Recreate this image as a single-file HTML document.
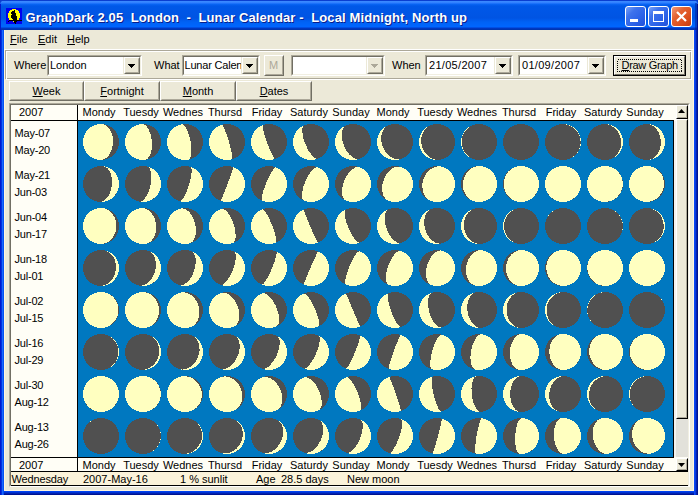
<!DOCTYPE html>
<html><head><meta charset="utf-8">
<style>
*{margin:0;padding:0;box-sizing:border-box}
html,body{width:698px;height:495px;overflow:hidden;background:#0A3ED0}
body{position:relative;font-family:"Liberation Sans",sans-serif;font-size:11px;color:#000}
.a{position:absolute}
.t{position:absolute;white-space:pre;line-height:1}
u{text-decoration:underline}
#title{position:absolute;left:0;top:0;width:698px;height:30px;border-top-left-radius:5px;border-top-right-radius:5px;
background:linear-gradient(#0A3ED0 0px,#0A3ED0 1px,#3D8BFF 1px,#2F7EFF 3px,#0A66F5 4px,#0058E8 6px,#0054E3 18px,#0062F5 22px,#0066FF 27px,#0039C9 28px,#0033A8 30px)}
#ttext{position:absolute;left:25.5px;top:11px;font-weight:bold;font-size:13px;line-height:13px;color:#fff;text-shadow:1px 1px 0 #0A1E8A;white-space:pre;letter-spacing:0.12px}
.tb{position:absolute;top:6px;width:21px;height:21px;border-radius:3px;border:1px solid #fff}
</style></head><body>
<div class="a" style="left:4px;top:30px;width:690px;height:461px;background:#ECE9D8;border-left:1px solid #FFF5DE;border-right:1px solid #FFF5DE;border-bottom:1px solid #FFF5DE"></div>
<div class="a" style="left:4px;top:491px;width:690px;height:1px;background:#0042F0"></div>
<div class="a" style="left:4px;top:492px;width:690px;height:1px;background:#0032D4"></div>
<div class="a" style="left:4px;top:493px;width:690px;height:1px;background:#0022B0"></div>
<div class="a" style="left:0px;top:494px;width:698px;height:1px;background:#001290"></div>
<div id="title">
 <div class="a" style="left:6px;top:8px;width:16px;height:16px;background:#0000F0">
  <svg width="16" height="16" style="position:absolute;left:0;top:0" shape-rendering="crispEdges"><rect x="6" y="1" width="4" height="1" fill="#FFFF00"/><rect x="4" y="2" width="8" height="1" fill="#FFFF00"/><rect x="3" y="3" width="10" height="1" fill="#FFFF00"/><rect x="3" y="4" width="10" height="1" fill="#FFFF00"/><rect x="2" y="5" width="12" height="1" fill="#FFFF00"/><rect x="2" y="6" width="12" height="1" fill="#FFFF00"/><rect x="2" y="7" width="12" height="1" fill="#FFFF00"/><rect x="2" y="8" width="12" height="1" fill="#FFFF00"/><rect x="2" y="9" width="12" height="1" fill="#FFFF00"/><rect x="3" y="10" width="10" height="1" fill="#FFFF00"/><rect x="3" y="11" width="10" height="1" fill="#FFFF00"/><rect x="7" y="13" width="1" height="1" fill="#FFFF00"/><rect x="8" y="2" width="1" height="1" fill="#000"/><rect x="6" y="3" width="3" height="1" fill="#000"/><rect x="5" y="4" width="4" height="1" fill="#000"/><rect x="5" y="5" width="5" height="1" fill="#000"/><rect x="6" y="6" width="4" height="1" fill="#000"/><rect x="5" y="7" width="5" height="1" fill="#000"/><rect x="5" y="8" width="6" height="1" fill="#000"/><rect x="5" y="9" width="6" height="1" fill="#000"/><rect x="6" y="10" width="5" height="1" fill="#000"/><rect x="7" y="11" width="4" height="1" fill="#000"/><rect x="3" y="12" width="13" height="1" fill="#000"/><rect x="2" y="13" width="1" height="1" fill="#000"/><rect x="8" y="13" width="3" height="1" fill="#000"/><rect x="8" y="14" width="2" height="1" fill="#000"/><rect x="9" y="15" width="1" height="1" fill="#000"/></svg>
 </div>
 <div id="ttext">GraphDark 2.05  London  -  Lunar Calendar -  Local Midnight, North up</div>
 <div class="tb" style="left:625px;background:linear-gradient(135deg,#7AA2F8 0%,#3E72EC 30%,#2C62E8 65%,#2050DA 100%)">
  <div class="a" style="left:4px;top:12px;width:8px;height:3px;background:#fff"></div>
 </div>
 <div class="tb" style="left:648px;background:linear-gradient(135deg,#7AA2F8 0%,#3E72EC 30%,#2C62E8 65%,#2050DA 100%)">
  <div class="a" style="left:4px;top:4px;width:11px;height:11px;border:1px solid #fff;border-top:3px solid #fff"></div>
 </div>
 <div class="tb" style="left:671px;background:linear-gradient(135deg,#F49A78 0%,#E46232 35%,#DC4E1C 70%,#C23C10 100%)">
  <svg width="19" height="19" style="position:absolute;left:0;top:0"><path d="M5 5 L14 14 M14 5 L5 14" stroke="#fff" stroke-width="2.2"/></svg>
 </div>
</div>
<div class="t" style="left:10px;top:33.69px;font-size:11px;"><u>F</u>ile</div><div class="t" style="left:38px;top:33.69px;font-size:11px;"><u>E</u>dit</div><div class="t" style="left:67px;top:33.69px;font-size:11px;"><u>H</u>elp</div><div class="a" style="left:4px;top:49px;width:690px;height:1px;background:#fff"></div><div class="a" style="left:5px;top:50px;width:686px;height:29px;border:1px solid #ACA899"></div><div class="a" style="left:6px;top:51px;width:686px;height:29px;border:1px solid #fff"></div><div class="t" style="left:14px;top:59.69px;font-size:11px;">Where</div><div class="a" style="left:47px;top:55px;width:95px;height:21px;background:#fff;border-top:1px solid #ACA899;border-left:1px solid #ACA899;border-right:1px solid #fff;border-bottom:1px solid #fff"></div><div class="a" style="left:48px;top:56px;width:93px;height:19px;border-top:1px solid #716F64;border-left:1px solid #716F64;border-right:1px solid #F1EFE2;border-bottom:1px solid #F1EFE2"></div><div class="t" style="left:50px;top:60.09px;font-size:11px;letter-spacing:0px">London</div><div class="a" style="left:123px;top:57px;width:1px;height:17px;background:#ECE9D8"></div><div class="a" style="left:124px;top:57px;width:16px;height:17px;background:#ECE9D8;border-top:1px solid #fff;border-left:1px solid #fff;border-right:1px solid #716F64;border-bottom:1px solid #716F64"></div><div class="a" style="left:125px;top:58px;width:14px;height:15px;border-top:1px solid #ECE9D8;border-left:1px solid #ECE9D8;border-right:1px solid #ACA899;border-bottom:1px solid #ACA899"></div><svg class="a" style="left:128px;top:64px" width="7" height="4" shape-rendering="crispEdges"><path d="M0,0H7L3.5,4Z" fill="#000"/></svg><div class="t" style="left:154px;top:59.69px;font-size:11px;">What</div><div class="a" style="left:182px;top:55px;width:78px;height:21px;background:#fff;border-top:1px solid #ACA899;border-left:1px solid #ACA899;border-right:1px solid #fff;border-bottom:1px solid #fff"></div><div class="a" style="left:183px;top:56px;width:76px;height:19px;border-top:1px solid #716F64;border-left:1px solid #716F64;border-right:1px solid #F1EFE2;border-bottom:1px solid #F1EFE2"></div><div class="t" style="left:184.5px;top:60.09px;font-size:11px;letter-spacing:-0.2px">Lunar Calen</div><div class="a" style="left:241px;top:57px;width:1px;height:17px;background:#ECE9D8"></div><div class="a" style="left:242px;top:57px;width:16px;height:17px;background:#ECE9D8;border-top:1px solid #fff;border-left:1px solid #fff;border-right:1px solid #716F64;border-bottom:1px solid #716F64"></div><div class="a" style="left:243px;top:58px;width:14px;height:15px;border-top:1px solid #ECE9D8;border-left:1px solid #ECE9D8;border-right:1px solid #ACA899;border-bottom:1px solid #ACA899"></div><svg class="a" style="left:246px;top:64px" width="7" height="4" shape-rendering="crispEdges"><path d="M0,0H7L3.5,4Z" fill="#000"/></svg><div class="a" style="left:264px;top:55px;width:20px;height:21px;background:#ECE9D8;border-top:1px solid #fff;border-left:1px solid #fff;border-right:1px solid #716F64;border-bottom:1px solid #716F64"></div><div class="a" style="left:265px;top:56px;width:18px;height:19px;border-top:1px solid #ECE9D8;border-left:1px solid #ECE9D8;border-right:1px solid #ACA899;border-bottom:1px solid #ACA899"></div><div class="t" style="left:269px;top:59.69px;font-size:11px;color:#ACA899">M</div><div class="a" style="left:291px;top:55px;width:94px;height:21px;background:#fff;border-top:1px solid #ACA899;border-left:1px solid #ACA899;border-right:1px solid #fff;border-bottom:1px solid #fff"></div><div class="a" style="left:292px;top:56px;width:92px;height:19px;border-top:1px solid #716F64;border-left:1px solid #716F64;border-right:1px solid #F1EFE2;border-bottom:1px solid #F1EFE2"></div><div class="a" style="left:366px;top:57px;width:1px;height:17px;background:#ECE9D8"></div><div class="a" style="left:367px;top:57px;width:16px;height:17px;background:#ECE9D8;border-top:1px solid #fff;border-left:1px solid #fff;border-right:1px solid #716F64;border-bottom:1px solid #716F64"></div><div class="a" style="left:368px;top:58px;width:14px;height:15px;border-top:1px solid #ECE9D8;border-left:1px solid #ECE9D8;border-right:1px solid #ACA899;border-bottom:1px solid #ACA899"></div><svg class="a" style="left:371px;top:64px" width="7" height="4" shape-rendering="crispEdges"><path d="M0,0H7L3.5,4Z" fill="#ACA899"/></svg><div class="t" style="left:392px;top:59.69px;font-size:11px;">When</div><div class="a" style="left:425px;top:55px;width:88px;height:21px;background:#fff;border-top:1px solid #ACA899;border-left:1px solid #ACA899;border-right:1px solid #fff;border-bottom:1px solid #fff"></div><div class="a" style="left:426px;top:56px;width:86px;height:19px;border-top:1px solid #716F64;border-left:1px solid #716F64;border-right:1px solid #F1EFE2;border-bottom:1px solid #F1EFE2"></div><div class="t" style="left:429px;top:60.09px;font-size:11px;letter-spacing:0.3px">21/05/2007</div><div class="a" style="left:494px;top:57px;width:1px;height:17px;background:#ECE9D8"></div><div class="a" style="left:495px;top:57px;width:16px;height:17px;background:#ECE9D8;border-top:1px solid #fff;border-left:1px solid #fff;border-right:1px solid #716F64;border-bottom:1px solid #716F64"></div><div class="a" style="left:496px;top:58px;width:14px;height:15px;border-top:1px solid #ECE9D8;border-left:1px solid #ECE9D8;border-right:1px solid #ACA899;border-bottom:1px solid #ACA899"></div><svg class="a" style="left:499px;top:64px" width="7" height="4" shape-rendering="crispEdges"><path d="M0,0H7L3.5,4Z" fill="#000"/></svg><div class="a" style="left:518px;top:55px;width:88px;height:21px;background:#fff;border-top:1px solid #ACA899;border-left:1px solid #ACA899;border-right:1px solid #fff;border-bottom:1px solid #fff"></div><div class="a" style="left:519px;top:56px;width:86px;height:19px;border-top:1px solid #716F64;border-left:1px solid #716F64;border-right:1px solid #F1EFE2;border-bottom:1px solid #F1EFE2"></div><div class="t" style="left:522px;top:60.09px;font-size:11px;letter-spacing:0.3px">01/09/2007</div><div class="a" style="left:587px;top:57px;width:1px;height:17px;background:#ECE9D8"></div><div class="a" style="left:588px;top:57px;width:16px;height:17px;background:#ECE9D8;border-top:1px solid #fff;border-left:1px solid #fff;border-right:1px solid #716F64;border-bottom:1px solid #716F64"></div><div class="a" style="left:589px;top:58px;width:14px;height:15px;border-top:1px solid #ECE9D8;border-left:1px solid #ECE9D8;border-right:1px solid #ACA899;border-bottom:1px solid #ACA899"></div><svg class="a" style="left:592px;top:64px" width="7" height="4" shape-rendering="crispEdges"><path d="M0,0H7L3.5,4Z" fill="#000"/></svg><div class="a" style="left:613px;top:55px;width:73px;height:21px;background:#ECE9D8;border:1px solid #000"></div><div class="a" style="left:614px;top:56px;width:71px;height:19px;border-top:1px solid #fff;border-left:1px solid #fff;border-right:1px solid #716F64;border-bottom:1px solid #716F64"></div><svg class="a" style="left:617px;top:59px" width="65" height="13" shape-rendering="crispEdges"><rect x="0.5" y="0.5" width="64" height="12" fill="none" stroke="#000" stroke-width="1" stroke-dasharray="1,1"/></svg><div class="t" style="left:621.5px;top:59.69px;font-size:11px;letter-spacing:-0.3px"><u>D</u>raw Graph</div><div class="a" style="left:9px;top:81px;width:75px;height:20px;background:#ECE9D8;border-top:1px solid #fff;border-left:1px solid #fff;border-right:1px solid #716F64;border-bottom:1px solid #716F64"></div><div class="a" style="left:10px;top:82px;width:73px;height:18px;border-top:1px solid #ECE9D8;border-left:1px solid #ECE9D8;border-right:1px solid #ACA899;border-bottom:1px solid #ACA899"></div><div class="t" style="left:9px;top:85.69px;width:75px;text-align:center;font-size:11px"><u>W</u>eek</div><div class="a" style="left:84px;top:81px;width:76px;height:20px;background:#ECE9D8;border-top:1px solid #fff;border-left:1px solid #fff;border-right:1px solid #716F64;border-bottom:1px solid #716F64"></div><div class="a" style="left:85px;top:82px;width:74px;height:18px;border-top:1px solid #ECE9D8;border-left:1px solid #ECE9D8;border-right:1px solid #ACA899;border-bottom:1px solid #ACA899"></div><div class="t" style="left:84px;top:85.69px;width:76px;text-align:center;font-size:11px"><u>F</u>ortnight</div><div class="a" style="left:160px;top:81px;width:76px;height:20px;background:#ECE9D8;border-top:1px solid #fff;border-left:1px solid #fff;border-right:1px solid #716F64;border-bottom:1px solid #716F64"></div><div class="a" style="left:161px;top:82px;width:74px;height:18px;border-top:1px solid #ECE9D8;border-left:1px solid #ECE9D8;border-right:1px solid #ACA899;border-bottom:1px solid #ACA899"></div><div class="t" style="left:160px;top:85.69px;width:76px;text-align:center;font-size:11px"><u>M</u>onth</div><div class="a" style="left:236px;top:81px;width:76px;height:20px;background:#ECE9D8;border-top:1px solid #fff;border-left:1px solid #fff;border-right:1px solid #716F64;border-bottom:1px solid #716F64"></div><div class="a" style="left:237px;top:82px;width:74px;height:18px;border-top:1px solid #ECE9D8;border-left:1px solid #ECE9D8;border-right:1px solid #ACA899;border-bottom:1px solid #ACA899"></div><div class="t" style="left:236px;top:85.69px;width:76px;text-align:center;font-size:11px"><u>D</u>ates</div><div class="a" style="left:9px;top:103px;width:681px;height:384px;border-top:1px solid #ACA899;border-left:1px solid #ACA899;border-right:1px solid #fff;border-bottom:1px solid #fff"></div><div class="a" style="left:10px;top:104px;width:679px;height:382px;background:#FFFEF6;border-top:1px solid #716F64;border-left:1px solid #716F64;border-right:1px solid #F1EFE2;border-bottom:1px solid #F1EFE2"></div><div class="a" style="left:11px;top:120px;width:663px;height:1px;background:#000"></div><div class="a" style="left:77px;top:105px;width:1px;height:366px;background:#000"></div><div class="a" style="left:673px;top:120px;width:1px;height:338px;background:#000"></div><div class="a" style="left:11px;top:457px;width:663px;height:1px;background:#000"></div><div class="a" style="left:11px;top:471px;width:677px;height:1px;background:#000"></div><div class="t" style="left:19px;top:106.69px;font-size:11px;">2007</div><div class="t" style="left:19px;top:459.69px;font-size:11px;">2007</div><div class="t" style="left:78px;top:106.69px;width:42px;text-align:center;font-size:11px">Mondy</div><div class="t" style="left:78px;top:459.69px;width:42px;text-align:center;font-size:11px">Mondy</div><div class="t" style="left:120px;top:106.69px;width:42px;text-align:center;font-size:11px">Tuesdy</div><div class="t" style="left:120px;top:459.69px;width:42px;text-align:center;font-size:11px">Tuesdy</div><div class="t" style="left:162px;top:106.69px;width:42px;text-align:center;font-size:11px">Wednes</div><div class="t" style="left:162px;top:459.69px;width:42px;text-align:center;font-size:11px">Wednes</div><div class="t" style="left:204px;top:106.69px;width:42px;text-align:center;font-size:11px">Thursd</div><div class="t" style="left:204px;top:459.69px;width:42px;text-align:center;font-size:11px">Thursd</div><div class="t" style="left:246px;top:106.69px;width:42px;text-align:center;font-size:11px">Friday</div><div class="t" style="left:246px;top:459.69px;width:42px;text-align:center;font-size:11px">Friday</div><div class="t" style="left:288px;top:106.69px;width:42px;text-align:center;font-size:11px">Saturdy</div><div class="t" style="left:288px;top:459.69px;width:42px;text-align:center;font-size:11px">Saturdy</div><div class="t" style="left:330px;top:106.69px;width:42px;text-align:center;font-size:11px">Sunday</div><div class="t" style="left:330px;top:459.69px;width:42px;text-align:center;font-size:11px">Sunday</div><div class="t" style="left:372px;top:106.69px;width:42px;text-align:center;font-size:11px">Mondy</div><div class="t" style="left:372px;top:459.69px;width:42px;text-align:center;font-size:11px">Mondy</div><div class="t" style="left:414px;top:106.69px;width:42px;text-align:center;font-size:11px">Tuesdy</div><div class="t" style="left:414px;top:459.69px;width:42px;text-align:center;font-size:11px">Tuesdy</div><div class="t" style="left:456px;top:106.69px;width:42px;text-align:center;font-size:11px">Wednes</div><div class="t" style="left:456px;top:459.69px;width:42px;text-align:center;font-size:11px">Wednes</div><div class="t" style="left:498px;top:106.69px;width:42px;text-align:center;font-size:11px">Thursd</div><div class="t" style="left:498px;top:459.69px;width:42px;text-align:center;font-size:11px">Thursd</div><div class="t" style="left:540px;top:106.69px;width:42px;text-align:center;font-size:11px">Friday</div><div class="t" style="left:540px;top:459.69px;width:42px;text-align:center;font-size:11px">Friday</div><div class="t" style="left:582px;top:106.69px;width:42px;text-align:center;font-size:11px">Saturdy</div><div class="t" style="left:582px;top:459.69px;width:42px;text-align:center;font-size:11px">Saturdy</div><div class="t" style="left:624px;top:106.69px;width:42px;text-align:center;font-size:11px">Sunday</div><div class="t" style="left:624px;top:459.69px;width:42px;text-align:center;font-size:11px">Sunday</div><div class="t" style="left:14.5px;top:127.69px;font-size:11px;letter-spacing:-0.2px">May-07</div><div class="t" style="left:14.5px;top:144.69px;font-size:11px;letter-spacing:-0.2px">May-20</div><div class="t" style="left:14.5px;top:169.69px;font-size:11px;letter-spacing:-0.2px">May-21</div><div class="t" style="left:14.5px;top:186.69px;font-size:11px;letter-spacing:-0.2px">Jun-03</div><div class="t" style="left:14.5px;top:211.69px;font-size:11px;letter-spacing:-0.2px">Jun-04</div><div class="t" style="left:14.5px;top:228.69px;font-size:11px;letter-spacing:-0.2px">Jun-17</div><div class="t" style="left:14.5px;top:253.69px;font-size:11px;letter-spacing:-0.2px">Jun-18</div><div class="t" style="left:14.5px;top:270.69px;font-size:11px;letter-spacing:-0.2px">Jul-01</div><div class="t" style="left:14.5px;top:295.69px;font-size:11px;letter-spacing:-0.2px">Jul-02</div><div class="t" style="left:14.5px;top:312.69px;font-size:11px;letter-spacing:-0.2px">Jul-15</div><div class="t" style="left:14.5px;top:337.69px;font-size:11px;letter-spacing:-0.2px">Jul-16</div><div class="t" style="left:14.5px;top:354.69px;font-size:11px;letter-spacing:-0.2px">Jul-29</div><div class="t" style="left:14.5px;top:379.69px;font-size:11px;letter-spacing:-0.2px">Jul-30</div><div class="t" style="left:14.5px;top:396.69px;font-size:11px;letter-spacing:-0.2px">Aug-12</div><div class="t" style="left:14.5px;top:421.69px;font-size:11px;letter-spacing:-0.2px">Aug-13</div><div class="t" style="left:14.5px;top:438.69px;font-size:11px;letter-spacing:-0.2px">Aug-26</div><div class="a" style="left:78px;top:121px;width:595px;height:336px;background:#0078C0"><svg width="595" height="336" style="position:absolute;left:0;top:0" shape-rendering="crispEdges"><circle cx="23" cy="21" r="18.0" fill="#505050"/><path transform="translate(23,21) rotate(-177.5)" d="M0,-18.0 A18.0,18.0 0 0 1 0,18.0 A11.97,18.0 0 0 1 0,-18.0Z" fill="#FFFFC0"/><circle cx="65" cy="21" r="18.0" fill="#505050"/><path transform="translate(65,21) rotate(175.2)" d="M0,-18.0 A18.0,18.0 0 0 1 0,18.0 A9.03,18.0 0 0 1 0,-18.0Z" fill="#FFFFC0"/><circle cx="107" cy="21" r="18.0" fill="#505050"/><path transform="translate(107,21) rotate(168.8)" d="M0,-18.0 A18.0,18.0 0 0 1 0,18.0 A5.64,18.0 0 0 1 0,-18.0Z" fill="#FFFFC0"/><circle cx="149" cy="21" r="18.0" fill="#505050"/><path transform="translate(149,21) rotate(163.7)" d="M0,-18.0 A18.0,18.0 0 0 1 0,18.0 A1.91,18.0 0 0 1 0,-18.0Z" fill="#FFFFC0"/><circle cx="191" cy="21" r="18.0" fill="#505050"/><path transform="translate(191,21) rotate(159.9)" d="M0,-18.0 A18.0,18.0 0 0 1 0,18.0 A2.04,18.0 0 0 0 0,-18.0Z" fill="#FFFFC0"/><circle cx="233" cy="21" r="18.0" fill="#505050"/><path transform="translate(233,21) rotate(157.8)" d="M0,-18.0 A18.0,18.0 0 0 1 0,18.0 A6.01,18.0 0 0 0 0,-18.0Z" fill="#FFFFC0"/><circle cx="275" cy="21" r="18.0" fill="#505050"/><path transform="translate(275,21) rotate(157.4)" d="M0,-18.0 A18.0,18.0 0 0 1 0,18.0 A9.76,18.0 0 0 0 0,-18.0Z" fill="#FFFFC0"/><circle cx="317" cy="21" r="18.0" fill="#505050"/><path transform="translate(317,21) rotate(159.2)" d="M0,-18.0 A18.0,18.0 0 0 1 0,18.0 A13.06,18.0 0 0 0 0,-18.0Z" fill="#FFFFC0"/><circle cx="359" cy="21" r="18.0" fill="#505050"/><path transform="translate(359,21) rotate(164.1)" d="M0,-18.0 A18.0,18.0 0 0 1 0,18.0 A15.64,18.0 0 0 0 0,-18.0Z" fill="#FFFFC0"/><circle cx="401" cy="21" r="18.0" fill="#505050"/><path transform="translate(401,21) rotate(175.8)" d="M0,-18.0 A18.0,18.0 0 0 1 0,18.0 A17.31,18.0 0 0 0 0,-18.0Z" fill="#FFFFC0"/><circle cx="443" cy="21" r="18.0" fill="#505050"/><path transform="translate(443,21) rotate(-119.9)" d="M0,-18.0 A18.0,18.0 0 0 1 0,18.0 A17.93,18.0 0 0 0 0,-18.0Z" fill="#FFFFC0"/><circle cx="485" cy="21" r="18.0" fill="#505050"/><path transform="translate(485,21) rotate(-30.3)" d="M0,-18.0 A18.0,18.0 0 0 1 0,18.0 A17.50,18.0 0 0 0 0,-18.0Z" fill="#FFFFC0"/><circle cx="527" cy="21" r="18.0" fill="#505050"/><path transform="translate(527,21) rotate(-12.7)" d="M0,-18.0 A18.0,18.0 0 0 1 0,18.0 A16.07,18.0 0 0 0 0,-18.0Z" fill="#FFFFC0"/><circle cx="569" cy="21" r="18.0" fill="#505050"/><path transform="translate(569,21) rotate(-1.9)" d="M0,-18.0 A18.0,18.0 0 0 1 0,18.0 A13.81,18.0 0 0 0 0,-18.0Z" fill="#FFFFC0"/><circle cx="23" cy="63" r="18.0" fill="#505050"/><path transform="translate(23,63) rotate(6.4)" d="M0,-18.0 A18.0,18.0 0 0 1 0,18.0 A10.93,18.0 0 0 0 0,-18.0Z" fill="#FFFFC0"/><circle cx="65" cy="63" r="18.0" fill="#505050"/><path transform="translate(65,63) rotate(12.8)" d="M0,-18.0 A18.0,18.0 0 0 1 0,18.0 A7.64,18.0 0 0 0 0,-18.0Z" fill="#FFFFC0"/><circle cx="107" cy="63" r="18.0" fill="#505050"/><path transform="translate(107,63) rotate(17.5)" d="M0,-18.0 A18.0,18.0 0 0 1 0,18.0 A4.12,18.0 0 0 0 0,-18.0Z" fill="#FFFFC0"/><circle cx="149" cy="63" r="18.0" fill="#505050"/><path transform="translate(149,63) rotate(20.7)" d="M0,-18.0 A18.0,18.0 0 0 1 0,18.0 A0.55,18.0 0 0 0 0,-18.0Z" fill="#FFFFC0"/><circle cx="191" cy="63" r="18.0" fill="#505050"/><path transform="translate(191,63) rotate(22.5)" d="M0,-18.0 A18.0,18.0 0 0 1 0,18.0 A2.94,18.0 0 0 1 0,-18.0Z" fill="#FFFFC0"/><circle cx="233" cy="63" r="18.0" fill="#505050"/><path transform="translate(233,63) rotate(23.0)" d="M0,-18.0 A18.0,18.0 0 0 1 0,18.0 A6.26,18.0 0 0 1 0,-18.0Z" fill="#FFFFC0"/><circle cx="275" cy="63" r="18.0" fill="#505050"/><path transform="translate(275,63) rotate(22.2)" d="M0,-18.0 A18.0,18.0 0 0 1 0,18.0 A9.31,18.0 0 0 1 0,-18.0Z" fill="#FFFFC0"/><circle cx="317" cy="63" r="18.0" fill="#505050"/><path transform="translate(317,63) rotate(20.0)" d="M0,-18.0 A18.0,18.0 0 0 1 0,18.0 A12.03,18.0 0 0 1 0,-18.0Z" fill="#FFFFC0"/><circle cx="359" cy="63" r="18.0" fill="#505050"/><path transform="translate(359,63) rotate(16.1)" d="M0,-18.0 A18.0,18.0 0 0 1 0,18.0 A14.32,18.0 0 0 1 0,-18.0Z" fill="#FFFFC0"/><circle cx="401" cy="63" r="18.0" fill="#505050"/><path transform="translate(401,63) rotate(9.7)" d="M0,-18.0 A18.0,18.0 0 0 1 0,18.0 A16.11,18.0 0 0 1 0,-18.0Z" fill="#FFFFC0"/><circle cx="443" cy="63" r="18.0" fill="#505050"/><path transform="translate(443,63) rotate(-2.2)" d="M0,-18.0 A18.0,18.0 0 0 1 0,18.0 A17.33,18.0 0 0 1 0,-18.0Z" fill="#FFFFC0"/><circle cx="485" cy="63" r="18.0" fill="#505050"/><path transform="translate(485,63) rotate(-42.5)" d="M0,-18.0 A18.0,18.0 0 0 1 0,18.0 A17.89,18.0 0 0 1 0,-18.0Z" fill="#FFFFC0"/><circle cx="527" cy="63" r="18.0" fill="#505050"/><path transform="translate(527,63) rotate(-142.2)" d="M0,-18.0 A18.0,18.0 0 0 1 0,18.0 A17.77,18.0 0 0 1 0,-18.0Z" fill="#FFFFC0"/><circle cx="569" cy="63" r="18.0" fill="#505050"/><path transform="translate(569,63) rotate(-167.2)" d="M0,-18.0 A18.0,18.0 0 0 1 0,18.0 A16.93,18.0 0 0 1 0,-18.0Z" fill="#FFFFC0"/><circle cx="23" cy="105" r="18.0" fill="#505050"/><path transform="translate(23,105) rotate(-179.0)" d="M0,-18.0 A18.0,18.0 0 0 1 0,18.0 A15.39,18.0 0 0 1 0,-18.0Z" fill="#FFFFC0"/><circle cx="65" cy="105" r="18.0" fill="#505050"/><path transform="translate(65,105) rotate(172.6)" d="M0,-18.0 A18.0,18.0 0 0 1 0,18.0 A13.16,18.0 0 0 1 0,-18.0Z" fill="#FFFFC0"/><circle cx="107" cy="105" r="18.0" fill="#505050"/><path transform="translate(107,105) rotate(166.1)" d="M0,-18.0 A18.0,18.0 0 0 1 0,18.0 A10.31,18.0 0 0 1 0,-18.0Z" fill="#FFFFC0"/><circle cx="149" cy="105" r="18.0" fill="#505050"/><path transform="translate(149,105) rotate(161.4)" d="M0,-18.0 A18.0,18.0 0 0 1 0,18.0 A6.94,18.0 0 0 1 0,-18.0Z" fill="#FFFFC0"/><circle cx="191" cy="105" r="18.0" fill="#505050"/><path transform="translate(191,105) rotate(158.4)" d="M0,-18.0 A18.0,18.0 0 0 1 0,18.0 A3.15,18.0 0 0 1 0,-18.0Z" fill="#FFFFC0"/><circle cx="233" cy="105" r="18.0" fill="#505050"/><path transform="translate(233,105) rotate(156.9)" d="M0,-18.0 A18.0,18.0 0 0 1 0,18.0 A0.87,18.0 0 0 0 0,-18.0Z" fill="#FFFFC0"/><circle cx="275" cy="105" r="18.0" fill="#505050"/><path transform="translate(275,105) rotate(157.2)" d="M0,-18.0 A18.0,18.0 0 0 1 0,18.0 A4.94,18.0 0 0 0 0,-18.0Z" fill="#FFFFC0"/><circle cx="317" cy="105" r="18.0" fill="#505050"/><path transform="translate(317,105) rotate(159.3)" d="M0,-18.0 A18.0,18.0 0 0 1 0,18.0 A8.81,18.0 0 0 0 0,-18.0Z" fill="#FFFFC0"/><circle cx="359" cy="105" r="18.0" fill="#505050"/><path transform="translate(359,105) rotate(163.5)" d="M0,-18.0 A18.0,18.0 0 0 1 0,18.0 A12.24,18.0 0 0 0 0,-18.0Z" fill="#FFFFC0"/><circle cx="401" cy="105" r="18.0" fill="#505050"/><path transform="translate(401,105) rotate(170.5)" d="M0,-18.0 A18.0,18.0 0 0 1 0,18.0 A15.00,18.0 0 0 0 0,-18.0Z" fill="#FFFFC0"/><circle cx="443" cy="105" r="18.0" fill="#505050"/><path transform="translate(443,105) rotate(-177.9)" d="M0,-18.0 A18.0,18.0 0 0 1 0,18.0 A16.91,18.0 0 0 0 0,-18.0Z" fill="#FFFFC0"/><circle cx="485" cy="105" r="18.0" fill="#505050"/><path transform="translate(485,105) rotate(-145.2)" d="M0,-18.0 A18.0,18.0 0 0 1 0,18.0 A17.84,18.0 0 0 0 0,-18.0Z" fill="#FFFFC0"/><circle cx="527" cy="105" r="18.0" fill="#505050"/><path transform="translate(527,105) rotate(-29.9)" d="M0,-18.0 A18.0,18.0 0 0 1 0,18.0 A17.78,18.0 0 0 0 0,-18.0Z" fill="#FFFFC0"/><circle cx="569" cy="105" r="18.0" fill="#505050"/><path transform="translate(569,105) rotate(-3.4)" d="M0,-18.0 A18.0,18.0 0 0 1 0,18.0 A16.77,18.0 0 0 0 0,-18.0Z" fill="#FFFFC0"/><circle cx="23" cy="147" r="18.0" fill="#505050"/><path transform="translate(23,147) rotate(7.6)" d="M0,-18.0 A18.0,18.0 0 0 1 0,18.0 A14.95,18.0 0 0 0 0,-18.0Z" fill="#FFFFC0"/><circle cx="65" cy="147" r="18.0" fill="#505050"/><path transform="translate(65,147) rotate(14.6)" d="M0,-18.0 A18.0,18.0 0 0 1 0,18.0 A12.48,18.0 0 0 0 0,-18.0Z" fill="#FFFFC0"/><circle cx="107" cy="147" r="18.0" fill="#505050"/><path transform="translate(107,147) rotate(19.1)" d="M0,-18.0 A18.0,18.0 0 0 1 0,18.0 A9.54,18.0 0 0 0 0,-18.0Z" fill="#FFFFC0"/><circle cx="149" cy="147" r="18.0" fill="#505050"/><path transform="translate(149,147) rotate(21.9)" d="M0,-18.0 A18.0,18.0 0 0 1 0,18.0 A6.29,18.0 0 0 0 0,-18.0Z" fill="#FFFFC0"/><circle cx="191" cy="147" r="18.0" fill="#505050"/><path transform="translate(191,147) rotate(23.3)" d="M0,-18.0 A18.0,18.0 0 0 1 0,18.0 A2.88,18.0 0 0 0 0,-18.0Z" fill="#FFFFC0"/><circle cx="233" cy="147" r="18.0" fill="#505050"/><path transform="translate(233,147) rotate(23.4)" d="M0,-18.0 A18.0,18.0 0 0 1 0,18.0 A0.56,18.0 0 0 1 0,-18.0Z" fill="#FFFFC0"/><circle cx="275" cy="147" r="18.0" fill="#505050"/><path transform="translate(275,147) rotate(22.3)" d="M0,-18.0 A18.0,18.0 0 0 1 0,18.0 A3.94,18.0 0 0 1 0,-18.0Z" fill="#FFFFC0"/><circle cx="317" cy="147" r="18.0" fill="#505050"/><path transform="translate(317,147) rotate(19.9)" d="M0,-18.0 A18.0,18.0 0 0 1 0,18.0 A7.16,18.0 0 0 1 0,-18.0Z" fill="#FFFFC0"/><circle cx="359" cy="147" r="18.0" fill="#505050"/><path transform="translate(359,147) rotate(16.3)" d="M0,-18.0 A18.0,18.0 0 0 1 0,18.0 A10.14,18.0 0 0 1 0,-18.0Z" fill="#FFFFC0"/><circle cx="401" cy="147" r="18.0" fill="#505050"/><path transform="translate(401,147) rotate(11.2)" d="M0,-18.0 A18.0,18.0 0 0 1 0,18.0 A12.78,18.0 0 0 1 0,-18.0Z" fill="#FFFFC0"/><circle cx="443" cy="147" r="18.0" fill="#505050"/><path transform="translate(443,147) rotate(4.3)" d="M0,-18.0 A18.0,18.0 0 0 1 0,18.0 A14.98,18.0 0 0 1 0,-18.0Z" fill="#FFFFC0"/><circle cx="485" cy="147" r="18.0" fill="#505050"/><path transform="translate(485,147) rotate(-5.5)" d="M0,-18.0 A18.0,18.0 0 0 1 0,18.0 A16.64,18.0 0 0 1 0,-18.0Z" fill="#FFFFC0"/><circle cx="527" cy="147" r="18.0" fill="#505050"/><path transform="translate(527,147) rotate(-23.8)" d="M0,-18.0 A18.0,18.0 0 0 1 0,18.0 A17.65,18.0 0 0 1 0,-18.0Z" fill="#FFFFC0"/><circle cx="569" cy="147" r="18.0" fill="#505050"/><path transform="translate(569,147) rotate(-115.6)" d="M0,-18.0 A18.0,18.0 0 0 1 0,18.0 A17.94,18.0 0 0 1 0,-18.0Z" fill="#FFFFC0"/><circle cx="23" cy="189" r="18.0" fill="#505050"/><path transform="translate(23,189) rotate(-175.3)" d="M0,-18.0 A18.0,18.0 0 0 1 0,18.0 A17.45,18.0 0 0 1 0,-18.0Z" fill="#FFFFC0"/><circle cx="65" cy="189" r="18.0" fill="#505050"/><path transform="translate(65,189) rotate(171.0)" d="M0,-18.0 A18.0,18.0 0 0 1 0,18.0 A16.15,18.0 0 0 1 0,-18.0Z" fill="#FFFFC0"/><circle cx="107" cy="189" r="18.0" fill="#505050"/><path transform="translate(107,189) rotate(163.6)" d="M0,-18.0 A18.0,18.0 0 0 1 0,18.0 A14.08,18.0 0 0 1 0,-18.0Z" fill="#FFFFC0"/><circle cx="149" cy="189" r="18.0" fill="#505050"/><path transform="translate(149,189) rotate(159.2)" d="M0,-18.0 A18.0,18.0 0 0 1 0,18.0 A11.29,18.0 0 0 1 0,-18.0Z" fill="#FFFFC0"/><circle cx="191" cy="189" r="18.0" fill="#505050"/><path transform="translate(191,189) rotate(156.7)" d="M0,-18.0 A18.0,18.0 0 0 1 0,18.0 A7.91,18.0 0 0 1 0,-18.0Z" fill="#FFFFC0"/><circle cx="233" cy="189" r="18.0" fill="#505050"/><path transform="translate(233,189) rotate(156.1)" d="M0,-18.0 A18.0,18.0 0 0 1 0,18.0 A4.07,18.0 0 0 1 0,-18.0Z" fill="#FFFFC0"/><circle cx="275" cy="189" r="18.0" fill="#505050"/><path transform="translate(275,189) rotate(157.1)" d="M0,-18.0 A18.0,18.0 0 0 1 0,18.0 A0.01,18.0 0 0 0 0,-18.0Z" fill="#FFFFC0"/><circle cx="317" cy="189" r="18.0" fill="#505050"/><path transform="translate(317,189) rotate(159.9)" d="M0,-18.0 A18.0,18.0 0 0 1 0,18.0 A4.12,18.0 0 0 0 0,-18.0Z" fill="#FFFFC0"/><circle cx="359" cy="189" r="18.0" fill="#505050"/><path transform="translate(359,189) rotate(164.5)" d="M0,-18.0 A18.0,18.0 0 0 1 0,18.0 A8.03,18.0 0 0 0 0,-18.0Z" fill="#FFFFC0"/><circle cx="401" cy="189" r="18.0" fill="#505050"/><path transform="translate(401,189) rotate(170.8)" d="M0,-18.0 A18.0,18.0 0 0 1 0,18.0 A11.52,18.0 0 0 0 0,-18.0Z" fill="#FFFFC0"/><circle cx="443" cy="189" r="18.0" fill="#505050"/><path transform="translate(443,189) rotate(179.0)" d="M0,-18.0 A18.0,18.0 0 0 1 0,18.0 A14.38,18.0 0 0 0 0,-18.0Z" fill="#FFFFC0"/><circle cx="485" cy="189" r="18.0" fill="#505050"/><path transform="translate(485,189) rotate(-170.6)" d="M0,-18.0 A18.0,18.0 0 0 1 0,18.0 A16.46,18.0 0 0 0 0,-18.0Z" fill="#FFFFC0"/><circle cx="527" cy="189" r="18.0" fill="#505050"/><path transform="translate(527,189) rotate(-153.1)" d="M0,-18.0 A18.0,18.0 0 0 1 0,18.0 A17.66,18.0 0 0 0 0,-18.0Z" fill="#FFFFC0"/><circle cx="569" cy="189" r="18.0" fill="#505050"/><path transform="translate(569,189) rotate(-43.5)" d="M0,-18.0 A18.0,18.0 0 0 1 0,18.0 A17.95,18.0 0 0 0 0,-18.0Z" fill="#FFFFC0"/><circle cx="23" cy="231" r="18.0" fill="#505050"/><path transform="translate(23,231) rotate(6.0)" d="M0,-18.0 A18.0,18.0 0 0 1 0,18.0 A17.37,18.0 0 0 0 0,-18.0Z" fill="#FFFFC0"/><circle cx="65" cy="231" r="18.0" fill="#505050"/><path transform="translate(65,231) rotate(16.0)" d="M0,-18.0 A18.0,18.0 0 0 1 0,18.0 A15.99,18.0 0 0 0 0,-18.0Z" fill="#FFFFC0"/><circle cx="107" cy="231" r="18.0" fill="#505050"/><path transform="translate(107,231) rotate(21.0)" d="M0,-18.0 A18.0,18.0 0 0 1 0,18.0 A13.96,18.0 0 0 0 0,-18.0Z" fill="#FFFFC0"/><circle cx="149" cy="231" r="18.0" fill="#505050"/><path transform="translate(149,231) rotate(23.5)" d="M0,-18.0 A18.0,18.0 0 0 1 0,18.0 A11.40,18.0 0 0 0 0,-18.0Z" fill="#FFFFC0"/><circle cx="191" cy="231" r="18.0" fill="#505050"/><path transform="translate(191,231) rotate(24.5)" d="M0,-18.0 A18.0,18.0 0 0 1 0,18.0 A8.46,18.0 0 0 0 0,-18.0Z" fill="#FFFFC0"/><circle cx="233" cy="231" r="18.0" fill="#505050"/><path transform="translate(233,231) rotate(24.1)" d="M0,-18.0 A18.0,18.0 0 0 1 0,18.0 A5.26,18.0 0 0 0 0,-18.0Z" fill="#FFFFC0"/><circle cx="275" cy="231" r="18.0" fill="#505050"/><path transform="translate(275,231) rotate(22.5)" d="M0,-18.0 A18.0,18.0 0 0 1 0,18.0 A1.91,18.0 0 0 0 0,-18.0Z" fill="#FFFFC0"/><circle cx="317" cy="231" r="18.0" fill="#505050"/><path transform="translate(317,231) rotate(19.7)" d="M0,-18.0 A18.0,18.0 0 0 1 0,18.0 A1.49,18.0 0 0 1 0,-18.0Z" fill="#FFFFC0"/><circle cx="359" cy="231" r="18.0" fill="#505050"/><path transform="translate(359,231) rotate(15.8)" d="M0,-18.0 A18.0,18.0 0 0 1 0,18.0 A4.85,18.0 0 0 1 0,-18.0Z" fill="#FFFFC0"/><circle cx="401" cy="231" r="18.0" fill="#505050"/><path transform="translate(401,231) rotate(10.8)" d="M0,-18.0 A18.0,18.0 0 0 1 0,18.0 A8.07,18.0 0 0 1 0,-18.0Z" fill="#FFFFC0"/><circle cx="443" cy="231" r="18.0" fill="#505050"/><path transform="translate(443,231) rotate(4.6)" d="M0,-18.0 A18.0,18.0 0 0 1 0,18.0 A11.04,18.0 0 0 1 0,-18.0Z" fill="#FFFFC0"/><circle cx="485" cy="231" r="18.0" fill="#505050"/><path transform="translate(485,231) rotate(-2.7)" d="M0,-18.0 A18.0,18.0 0 0 1 0,18.0 A13.65,18.0 0 0 1 0,-18.0Z" fill="#FFFFC0"/><circle cx="527" cy="231" r="18.0" fill="#505050"/><path transform="translate(527,231) rotate(-10.9)" d="M0,-18.0 A18.0,18.0 0 0 1 0,18.0 A15.75,18.0 0 0 1 0,-18.0Z" fill="#FFFFC0"/><circle cx="569" cy="231" r="18.0" fill="#505050"/><path transform="translate(569,231) rotate(-21.3)" d="M0,-18.0 A18.0,18.0 0 0 1 0,18.0 A17.22,18.0 0 0 1 0,-18.0Z" fill="#FFFFC0"/><circle cx="23" cy="273" r="18.0" fill="#505050"/><path transform="translate(23,273) rotate(-50.1)" d="M0,-18.0 A18.0,18.0 0 0 1 0,18.0 A17.93,18.0 0 0 1 0,-18.0Z" fill="#FFFFC0"/><circle cx="65" cy="273" r="18.0" fill="#505050"/><path transform="translate(65,273) rotate(175.6)" d="M0,-18.0 A18.0,18.0 0 0 1 0,18.0 A17.79,18.0 0 0 1 0,-18.0Z" fill="#FFFFC0"/><circle cx="107" cy="273" r="18.0" fill="#505050"/><path transform="translate(107,273) rotate(161.5)" d="M0,-18.0 A18.0,18.0 0 0 1 0,18.0 A16.75,18.0 0 0 1 0,-18.0Z" fill="#FFFFC0"/><circle cx="149" cy="273" r="18.0" fill="#505050"/><path transform="translate(149,273) rotate(156.7)" d="M0,-18.0 A18.0,18.0 0 0 1 0,18.0 A14.82,18.0 0 0 1 0,-18.0Z" fill="#FFFFC0"/><circle cx="191" cy="273" r="18.0" fill="#505050"/><path transform="translate(191,273) rotate(155.0)" d="M0,-18.0 A18.0,18.0 0 0 1 0,18.0 A12.10,18.0 0 0 1 0,-18.0Z" fill="#FFFFC0"/><circle cx="233" cy="273" r="18.0" fill="#505050"/><path transform="translate(233,273) rotate(155.3)" d="M0,-18.0 A18.0,18.0 0 0 1 0,18.0 A8.71,18.0 0 0 1 0,-18.0Z" fill="#FFFFC0"/><circle cx="275" cy="273" r="18.0" fill="#505050"/><path transform="translate(275,273) rotate(157.3)" d="M0,-18.0 A18.0,18.0 0 0 1 0,18.0 A4.85,18.0 0 0 1 0,-18.0Z" fill="#FFFFC0"/><circle cx="317" cy="273" r="18.0" fill="#505050"/><path transform="translate(317,273) rotate(161.1)" d="M0,-18.0 A18.0,18.0 0 0 1 0,18.0 A0.76,18.0 0 0 1 0,-18.0Z" fill="#FFFFC0"/><circle cx="359" cy="273" r="18.0" fill="#505050"/><path transform="translate(359,273) rotate(166.4)" d="M0,-18.0 A18.0,18.0 0 0 1 0,18.0 A3.36,18.0 0 0 0 0,-18.0Z" fill="#FFFFC0"/><circle cx="401" cy="273" r="18.0" fill="#505050"/><path transform="translate(401,273) rotate(173.0)" d="M0,-18.0 A18.0,18.0 0 0 1 0,18.0 A7.26,18.0 0 0 0 0,-18.0Z" fill="#FFFFC0"/><circle cx="443" cy="273" r="18.0" fill="#505050"/><path transform="translate(443,273) rotate(-179.5)" d="M0,-18.0 A18.0,18.0 0 0 1 0,18.0 A10.76,18.0 0 0 0 0,-18.0Z" fill="#FFFFC0"/><circle cx="485" cy="273" r="18.0" fill="#505050"/><path transform="translate(485,273) rotate(-171.8)" d="M0,-18.0 A18.0,18.0 0 0 1 0,18.0 A13.68,18.0 0 0 0 0,-18.0Z" fill="#FFFFC0"/><circle cx="527" cy="273" r="18.0" fill="#505050"/><path transform="translate(527,273) rotate(-164.1)" d="M0,-18.0 A18.0,18.0 0 0 1 0,18.0 A15.90,18.0 0 0 0 0,-18.0Z" fill="#FFFFC0"/><circle cx="569" cy="273" r="18.0" fill="#505050"/><path transform="translate(569,273) rotate(-156.0)" d="M0,-18.0 A18.0,18.0 0 0 1 0,18.0 A17.34,18.0 0 0 0 0,-18.0Z" fill="#FFFFC0"/><circle cx="23" cy="315" r="18.0" fill="#505050"/><path transform="translate(23,315) rotate(-133.2)" d="M0,-18.0 A18.0,18.0 0 0 1 0,18.0 A17.96,18.0 0 0 0 0,-18.0Z" fill="#FFFFC0"/><circle cx="65" cy="315" r="18.0" fill="#505050"/><path transform="translate(65,315) rotate(16.6)" d="M0,-18.0 A18.0,18.0 0 0 1 0,18.0 A17.79,18.0 0 0 0 0,-18.0Z" fill="#FFFFC0"/><circle cx="107" cy="315" r="18.0" fill="#505050"/><path transform="translate(107,315) rotate(23.9)" d="M0,-18.0 A18.0,18.0 0 0 1 0,18.0 A16.87,18.0 0 0 0 0,-18.0Z" fill="#FFFFC0"/><circle cx="149" cy="315" r="18.0" fill="#505050"/><path transform="translate(149,315) rotate(26.0)" d="M0,-18.0 A18.0,18.0 0 0 1 0,18.0 A15.28,18.0 0 0 0 0,-18.0Z" fill="#FFFFC0"/><circle cx="191" cy="315" r="18.0" fill="#505050"/><path transform="translate(191,315) rotate(26.2)" d="M0,-18.0 A18.0,18.0 0 0 1 0,18.0 A13.13,18.0 0 0 0 0,-18.0Z" fill="#FFFFC0"/><circle cx="233" cy="315" r="18.0" fill="#505050"/><path transform="translate(233,315) rotate(25.1)" d="M0,-18.0 A18.0,18.0 0 0 1 0,18.0 A10.53,18.0 0 0 0 0,-18.0Z" fill="#FFFFC0"/><circle cx="275" cy="315" r="18.0" fill="#505050"/><path transform="translate(275,315) rotate(22.9)" d="M0,-18.0 A18.0,18.0 0 0 1 0,18.0 A7.57,18.0 0 0 0 0,-18.0Z" fill="#FFFFC0"/><circle cx="317" cy="315" r="18.0" fill="#505050"/><path transform="translate(317,315) rotate(19.5)" d="M0,-18.0 A18.0,18.0 0 0 1 0,18.0 A4.36,18.0 0 0 0 0,-18.0Z" fill="#FFFFC0"/><circle cx="359" cy="315" r="18.0" fill="#505050"/><path transform="translate(359,315) rotate(15.0)" d="M0,-18.0 A18.0,18.0 0 0 1 0,18.0 A0.99,18.0 0 0 0 0,-18.0Z" fill="#FFFFC0"/><circle cx="401" cy="315" r="18.0" fill="#505050"/><path transform="translate(401,315) rotate(9.6)" d="M0,-18.0 A18.0,18.0 0 0 1 0,18.0 A2.45,18.0 0 0 1 0,-18.0Z" fill="#FFFFC0"/><circle cx="443" cy="315" r="18.0" fill="#505050"/><path transform="translate(443,315) rotate(3.4)" d="M0,-18.0 A18.0,18.0 0 0 1 0,18.0 A5.86,18.0 0 0 1 0,-18.0Z" fill="#FFFFC0"/><circle cx="485" cy="315" r="18.0" fill="#505050"/><path transform="translate(485,315) rotate(-3.2)" d="M0,-18.0 A18.0,18.0 0 0 1 0,18.0 A9.13,18.0 0 0 1 0,-18.0Z" fill="#FFFFC0"/><circle cx="527" cy="315" r="18.0" fill="#505050"/><path transform="translate(527,315) rotate(-9.9)" d="M0,-18.0 A18.0,18.0 0 0 1 0,18.0 A12.11,18.0 0 0 1 0,-18.0Z" fill="#FFFFC0"/><circle cx="569" cy="315" r="18.0" fill="#505050"/><path transform="translate(569,315) rotate(-16.2)" d="M0,-18.0 A18.0,18.0 0 0 1 0,18.0 A14.66,18.0 0 0 1 0,-18.0Z" fill="#FFFFC0"/></svg></div><div class="a" style="left:674px;top:121px;width:14px;height:336px;background:#E2E1DA"></div><div class="a" style="left:674px;top:121px;width:2px;height:336px;background:#F4F3EE"></div><div class="a" style="left:676px;top:105px;width:12px;height:14px;background:#ECE9D8;border-top:1px solid #fff;border-left:1px solid #fff;border-right:1px solid #000;border-bottom:1px solid #000"></div><div class="a" style="left:677px;top:106px;width:10px;height:12px;border-top:1px solid #ECE9D8;border-left:1px solid #ECE9D8;border-right:1px solid #ACA899;border-bottom:1px solid #ACA899"></div><svg class="a" style="left:678px;top:109px" width="7" height="4"><path d="M0,4H7L3.5,0Z" fill="#000"/></svg><div class="a" style="left:676px;top:119px;width:12px;height:300px;background:#ECE9D8;border-top:1px solid #fff;border-left:1px solid #fff;border-right:1px solid #000;border-bottom:1px solid #000"></div><div class="a" style="left:677px;top:120px;width:10px;height:298px;border-top:1px solid #ECE9D8;border-left:1px solid #ECE9D8;border-right:1px solid #ACA899;border-bottom:1px solid #ACA899"></div><div class="a" style="left:676px;top:458px;width:12px;height:13px;background:#ECE9D8;border-top:1px solid #fff;border-left:1px solid #fff;border-right:1px solid #000;border-bottom:1px solid #000"></div><div class="a" style="left:677px;top:459px;width:10px;height:11px;border-top:1px solid #ECE9D8;border-left:1px solid #ECE9D8;border-right:1px solid #ACA899;border-bottom:1px solid #ACA899"></div><svg class="a" style="left:678px;top:463px" width="7" height="4"><path d="M0,0H7L3.5,4Z" fill="#000"/></svg><div class="a" style="left:11px;top:472px;width:677px;height:14px;background:#FBF3DA;border-bottom:1px solid #000"></div><div class="t" style="left:11.5px;top:473.69px;font-size:11px;letter-spacing:-0.15px">Wednesday</div><div class="t" style="left:83px;top:473.69px;font-size:11px;">2007-May-16</div><div class="t" style="left:180px;top:473.69px;font-size:11px;">1 %</div><div class="t" style="left:202px;top:473.69px;font-size:11px;">sunlit</div><div class="t" style="left:256px;top:473.69px;font-size:11px;">Age</div><div class="t" style="left:281px;top:473.69px;font-size:11px;">28.5 days</div><div class="t" style="left:347px;top:473.69px;font-size:11px;">New moon</div>
<div class="a" style="left:0;top:4px;width:1px;height:491px;background:#0019CF"></div>
<div class="a" style="left:1px;top:30px;width:1px;height:465px;background:#0033E0"></div>
<div class="a" style="left:2px;top:30px;width:1px;height:465px;background:#1A68FF"></div>
<div class="a" style="left:3px;top:30px;width:1px;height:465px;background:#0552F2"></div>
<div class="a" style="left:694px;top:30px;width:1px;height:465px;background:#0848F2"></div>
<div class="a" style="left:695px;top:30px;width:1px;height:465px;background:#0838E0"></div>
<div class="a" style="left:696px;top:30px;width:1px;height:465px;background:#0024B0"></div><div class="a" style="left:695px;top:3px;width:2px;height:27px;background:rgba(0,20,140,0.45)"></div>
<div class="a" style="left:697px;top:4px;width:1px;height:491px;background:#001190"></div>
</body></html>
